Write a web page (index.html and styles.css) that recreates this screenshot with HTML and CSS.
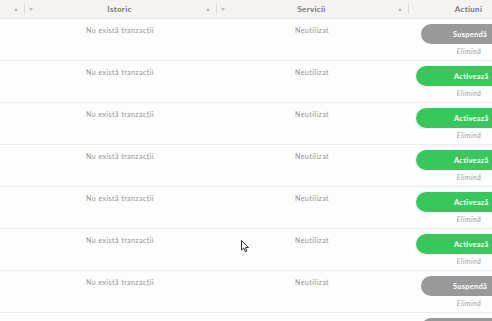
FILE: index.html
```html
<!DOCTYPE html>
<html lang="ro">
<head>
    <meta charset="UTF-8">
    <title>Servicii</title>
    <link rel="stylesheet" href="styles.css">
</head>
<body>
    <div class="table">
        <div class="row head">
            <div class="th first"><span class="up"></span></div>
            <div class="th"><span class="down"></span><span class="title">Istoric</span><span class="up"></span></div>
            <div class="th"><span class="down"></span><span class="title">Servicii</span><span class="up"></span></div>
            <div class="th last"><span class="title">Actiuni</span></div>
        </div>

        <div class="row">
            <div class="td"></div>
            <div class="td">Nu există tranzacții</div>
            <div class="td">Neutilizat</div>
            <div class="td actions"><button class="btn grey">Suspendă</button><a class="remove">Elimină</a></div>
        </div>
        <div class="row">
            <div class="td"></div>
            <div class="td">Nu există tranzacții</div>
            <div class="td">Neutilizat</div>
            <div class="td actions"><button class="btn green">Activează</button><a class="remove">Elimină</a></div>
        </div>
        <div class="row">
            <div class="td"></div>
            <div class="td">Nu există tranzacții</div>
            <div class="td">Neutilizat</div>
            <div class="td actions"><button class="btn green">Activează</button><a class="remove">Elimină</a></div>
        </div>
        <div class="row">
            <div class="td"></div>
            <div class="td">Nu există tranzacții</div>
            <div class="td">Neutilizat</div>
            <div class="td actions"><button class="btn green">Activează</button><a class="remove">Elimină</a></div>
        </div>
        <div class="row">
            <div class="td"></div>
            <div class="td">Nu există tranzacții</div>
            <div class="td">Neutilizat</div>
            <div class="td actions"><button class="btn green">Activează</button><a class="remove">Elimină</a></div>
        </div>
        <div class="row">
            <div class="td"></div>
            <div class="td">Nu există tranzacții</div>
            <div class="td">Neutilizat</div>
            <div class="td actions"><button class="btn green">Activează</button><a class="remove">Elimină</a></div>
        </div>
        <div class="row">
            <div class="td"></div>
            <div class="td">Nu există tranzacții</div>
            <div class="td">Neutilizat</div>
            <div class="td actions"><button class="btn grey">Suspendă</button><a class="remove">Elimină</a></div>
        </div>
        <!-- last row: only the top of its button is in view -->
        <div class="row">
            <div class="td"></div>
            <div class="td"></div>
            <div class="td"></div>
            <div class="td actions"><span class="btn grey stub"></span></div>
        </div>
    </div>

    <!-- mouse pointer over the table -->
    <svg class="cursor" width="9" height="13" viewBox="0 0 9 13">
        <path d="M0.5 0.5 L0.5 10 L2.8 8 L4.4 11.8 L5.9 11.1 L4.4 7.5 L7.6 7.5 Z" fill="#fff" stroke="#333" stroke-width="1"/>
    </svg>
</body>
</html>
```

FILE: styles.css
```css
body {
    margin: 0;
    padding: 0;
    width: 492px;
    height: 321px;
    overflow: hidden;
    background-color: #fdfdfd;
    font-family: Lato, "Noto Sans", sans-serif;
    position: relative;
}

.table {
    width: 530px;
}

.row {
    display: grid;
    grid-template-columns: 24px 192px 192px 122px;
    height: 42px;
    border-bottom: 1px solid #ededed;
    box-sizing: border-box;
}

.head {
    height: 19px;
    background-color: #f4f3f1;
    border-bottom: 1px solid #ebe9e6;
}

.th {
    display: flex;
    align-items: center;
    padding: 0 6px 0 5px;
    font-size: 8px;
    font-weight: bold;
    color: #777371;
    letter-spacing: 0.3px;
    background: linear-gradient(#dddbd8, #dddbd8) left center / 1px 10px no-repeat;
}

.th.first {
    justify-content: flex-end;
    background: none;
    padding-right: 6px;
}

.th.last {
    justify-content: center;
}

.th .title {
    flex: 1;
    text-align: center;
}

.th.last .title {
    flex: none;
}

.up {
    width: 0;
    height: 0;
    border-left: 2px solid transparent;
    border-right: 2px solid transparent;
    border-bottom: 3px solid #bcb8b5;
}

.down {
    width: 0;
    height: 0;
    border-left: 2px solid transparent;
    border-right: 2px solid transparent;
    border-top: 3px solid #c2b8b6;
}

.td {
    padding-top: 7px;
    text-align: center;
    font-size: 7px;
    color: #93908e;
    letter-spacing: 0.45px;
}

.actions {
    padding-top: 5px;
    display: flex;
    flex-direction: column;
    align-items: flex-start;
}

.btn {
    display: block;
    height: 20px;
    padding: 0 33px 0 32px;
    margin-left: 13px;
    border: none;
    border-radius: 10px;
    font-family: Lato, "Noto Sans", sans-serif;
    font-size: 7.5px;
    font-weight: bold;
    letter-spacing: 0.25px;
    color: #ffffff;
    cursor: pointer;
}

.btn.green {
    background-color: #37c75b;
    margin-left: 8px;
    padding-left: 38px;
}

.btn.grey {
    background-color: #999999;
}

.btn.stub {
    width: 120px;
}

.remove {
    align-self: center;
    margin-top: 3px;
    font-size: 7px;
    font-style: italic;
    color: #a3a09e;
}

.cursor {
    position: absolute;
    left: 241px;
    top: 240px;
}
```
